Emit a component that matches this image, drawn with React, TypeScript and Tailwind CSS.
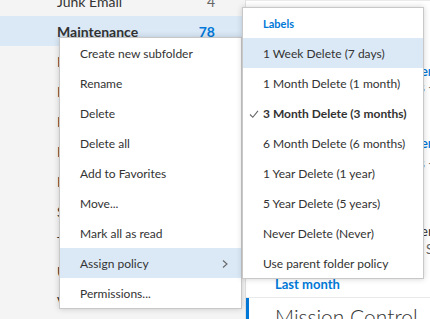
import { Fragment } from "react";

const folders = [
  { name: "Junk Email", count: "4" },
  { name: "Maintenance", count: "78", active: true },
  { name: "Notes", count: "" },
  { name: "RSS Feeds", count: "" },
  { name: "Deleted Items", count: "" },
  { name: "Projects", count: "" },
  { name: "Inbox", count: "" },
  { name: "Sent Items", count: "" },
  { name: "Travel", count: "" },
  { name: "Updates", count: "" },
  { name: "Vendors", count: "" },
];

const menuItems = [
  "Create new subfolder",
  "Rename",
  "Delete",
  "Delete all",
  "Add to Favorites",
  "Move...",
  "Mark all as read",
  "Assign policy",
  "Permissions...",
];

const policies = [
  "1 Week Delete (7 days)",
  "1 Month Delete (1 month)",
  "3 Month Delete (3 months)",
  "6 Month Delete (6 months)",
  "1 Year Delete (1 year)",
  "5 Year Delete (5 years)",
  "Never Delete (Never)",
  "Use parent folder policy",
];

export default function App() {
  return (
    <div className="relative flex w-[430px] h-[319px] overflow-hidden bg-white text-[#333333] font-['Lato','Liberation_Sans',sans-serif] text-[12px]">
      {/* Folder pane */}
      <div className="w-[246px] shrink-0 bg-[#f4f4f4] border-r border-[#e1e1e1]">
        <div className="-mt-[14px]">
          {folders.map((f) => (
            <div
              key={f.name}
              className={`flex h-[30px] items-center justify-between pl-[57px] pr-[30px] text-[14px] ${
                f.active ? "bg-[#dbe9f7] font-bold" : ""
              }`}
            >
              <span>{f.name}</span>
              <span className={f.active ? "text-[#0078d7]" : "text-[#666666]"}>{f.count}</span>
            </div>
          ))}
        </div>
      </div>

      {/* Message list */}
      <div className="relative flex-1 flex flex-col">
        <div className="h-[9px] border-b border-[#eaeaea]" />
        <div className="mt-[62px] flex flex-col items-end -mr-[3px] whitespace-nowrap">
          <div className="text-[14px] font-semibold text-[#0078d7] leading-[16px]">Service Manager</div>
          <div className="text-[13px] text-[#666666] leading-[16px]">Status -</div>
          <div className="mt-[40px] text-[14px] font-semibold text-[#0078d7] leading-[16px]">Service Manager</div>
          <div className="mt-[4px] text-[13px] text-[#666666] leading-[16px]">Status -</div>
          <div className="mt-[52px] text-[14px] text-[#333333] leading-[16px]">Service Manager</div>
          <div className="mt-[2px] text-[13px] text-[#666666] leading-[16px]">Subject: S</div>
        </div>
        <div className="mt-[19px] pl-[29px] text-[13px] font-bold text-[#0078d7] leading-[16px]">Last month</div>
        <div className="mt-[5px] border-t border-[#eaeaea] flex-1 flex">
          <div className="w-[3px] bg-[#0078d7]" />
          <div className="pl-[26px] pt-[6px] text-[21px] font-light text-[#333333] leading-[26px] whitespace-nowrap">
            Mission Control
          </div>
        </div>
      </div>

      {/* Context menu */}
      <div className="absolute left-[59px] top-[37px] w-[183px] bg-white border border-[#c8c8c8] shadow-[0_0_6px_rgba(0,0,0,0.18)]">
        {menuItems.map((item) => (
          <div
            key={item}
            className={`flex h-[30px] items-center justify-between pl-[20px] pr-[12px] pt-[1px] ${
              item === "Assign policy" ? "bg-[#dbe9f7]" : ""
            }`}
          >
            <span>{item}</span>
            {item === "Assign policy" && (
              <svg width="8" height="10" viewBox="0 0 8 10" className="text-[#666666]">
                <path d="M2 1.5 L6 5 L2 8.5" fill="none" stroke="currentColor" strokeWidth="1.1" />
              </svg>
            )}
          </div>
        ))}
      </div>

      {/* Policy submenu */}
      <div className="absolute left-[242px] top-[7px] w-[182px] bg-white border border-[#c8c8c8] shadow-[0_0_6px_rgba(0,0,0,0.18)]">
        <div className="flex h-[30px] items-center pl-[20px] pt-[3px] text-[11px] font-bold text-[#0078d7]">Labels</div>
        {policies.map((p, i) => (
          <Fragment key={p}>
            <div
              className={`relative flex h-[30px] items-center pl-[20px] pt-[1px] whitespace-nowrap ${
                i === 0 ? "bg-[#dbe9f7]" : ""
              } ${i === 2 ? "font-bold" : ""}`}
            >
              {i === 2 && (
                <svg width="10" height="10" viewBox="0 0 10 10" className="absolute left-[6px] text-[#666666]">
                  <path d="M1 5.5 L3.8 8.3 L9 1.8" fill="none" stroke="currentColor" strokeWidth="1.1" />
                </svg>
              )}
              <span>{p}</span>
            </div>
          </Fragment>
        ))}
      </div>
    </div>
  );
}
